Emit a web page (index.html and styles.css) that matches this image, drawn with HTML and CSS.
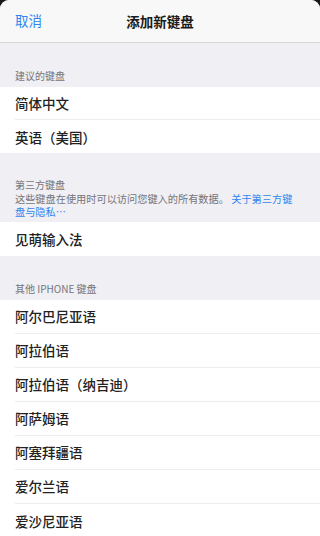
FILE: index.html
```html
<!DOCTYPE html>
<html lang="zh-CN">
<head>
<meta charset="utf-8">
<title>添加新键盘</title>
<link rel="stylesheet" href="styles.css">
</head>
<body>
<div class="sheet">
  <header class="nav">
    <span class="cancel">取消</span>
    <span class="title">添加新键盘</span>
  </header>

  <div class="section-head">建议的键盘</div>
  <ul class="group">
    <li class="row">简体中文</li>
    <li class="row">英语（美国）</li>
  </ul>

  <div class="section-head third">
    <div>第三方键盘</div>
    <div class="desc">这些键盘在使用时可以访问您键入的所有数据。 <span class="link">关于第三方键盘与隐私…</span></div>
  </div>
  <ul class="group">
    <li class="row">见萌输入法</li>
  </ul>

  <div class="section-head">其他 IPHONE 键盘</div>
  <ul class="group">
    <li class="row">阿尔巴尼亚语</li>
    <li class="row">阿拉伯语</li>
    <li class="row">阿拉伯语（纳吉迪）</li>
    <li class="row">阿萨姆语</li>
    <li class="row">阿塞拜疆语</li>
    <li class="row">爱尔兰语</li>
    <li class="row">爱沙尼亚语</li>
  </ul>
</div>
</body>
</html>
```

FILE: styles.css
```css
html, body {
  margin: 0;
  padding: 0;
  background: #1a1a1a;
  height: 536px;
  overflow: hidden;
}

.sheet {
  background: #efeff4;
  border-radius: 9px 9px 0 0;
  height: 536px;
  overflow: hidden;
  font-family: "Noto Sans CJK SC", "Noto Sans", sans-serif;
  color: #1f1f1f;
}

.nav {
  height: 42px;
  background: #f8f8f8;
  border-bottom: 1px solid #d9d9dc;
  display: flex;
  align-items: center;
  justify-content: center;
  position: relative;
}

.cancel {
  position: absolute;
  left: 15px;
  top: 11px;
  font-size: 13.5px;
  line-height: 18px;
  color: #2f86f0;
}

.title {
  font-size: 13.5px;
  font-weight: 700;
  line-height: 18px;
  color: #1a1a1a;
  margin-top: -1px;
}

.section-head {
  height: 13px;
  padding: 26px 15px 5px;
  font-size: 10px;
  line-height: 13px;
  color: #75757a;
}

.section-head.third {
  height: auto;
  padding: 25px 15px 3px;
  line-height: 13.5px;
}

.desc {
  font-size: 10.2px;
  line-height: 13.5px;
  padding-right: 6px;
}

.link {
  color: #2f86f0;
}

.group {
  list-style: none;
  margin: 0;
  padding: 0;
  background: #ffffff;
}

.row {
  height: 34px;
  display: flex;
  align-items: center;
  margin-left: 15px;
  font-size: 13.5px;
  font-weight: 500;
  color: #222222;
  box-sizing: border-box;
  border-bottom: 1px solid #ececee;
}

.row:last-child {
  border-bottom: none;
}

.group:first-of-type .row {
  height: 33px;
}
```
